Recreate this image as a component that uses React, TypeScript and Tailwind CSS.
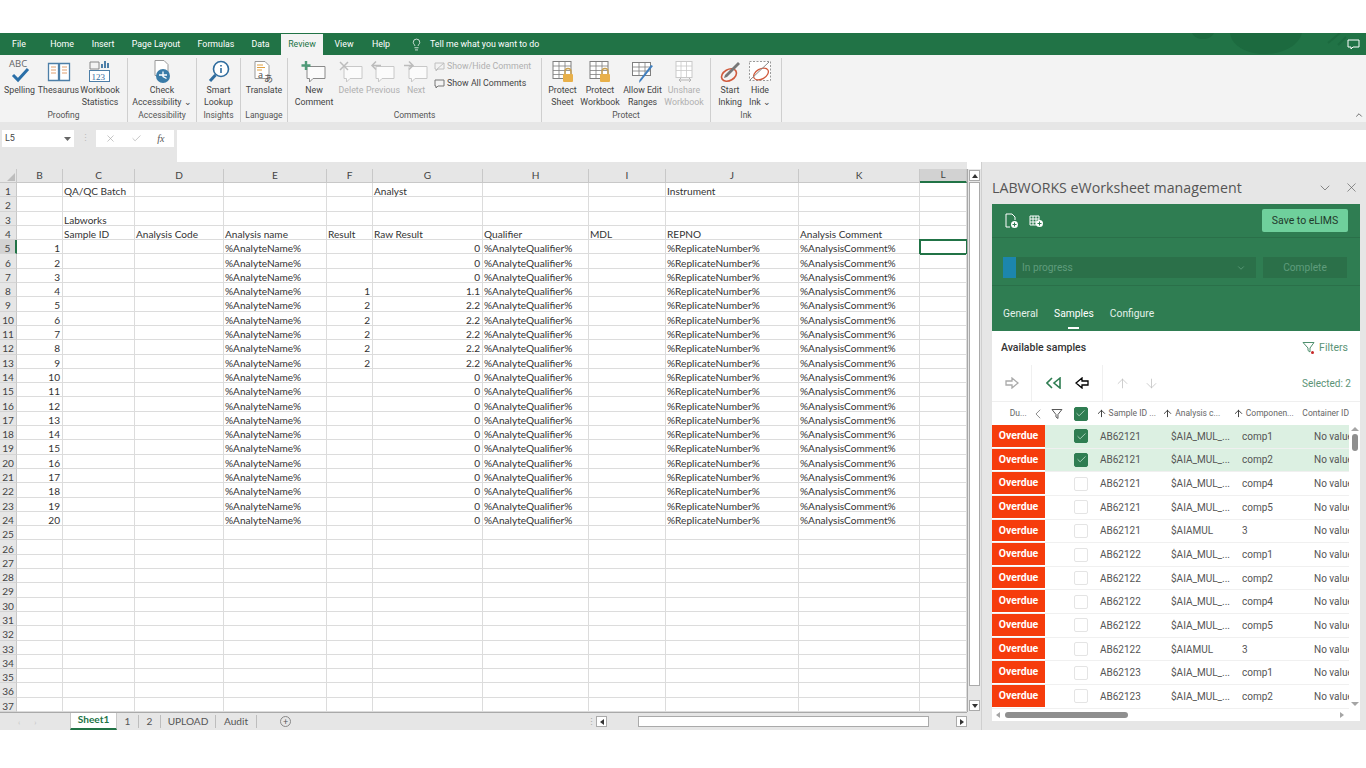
import type { ReactNode } from 'react';
import { ChevronDown, ChevronLeft, ChevronUp, X, Check, Lightbulb, ArrowUp, ArrowDown } from 'lucide-react';

const cols = ['B', 'C', 'D', 'E', 'F', 'G', 'H', 'I', 'J', 'K', 'L'];

const results: Record<number, [string, string]> = {
  8: ['1', '1.1'],
  9: ['2', '2.2'],
  10: ['2', '2.2'],
  11: ['2', '2.2'],
  12: ['2', '2.2'],
  13: ['2', '2.2'],
};

function rowCells(r: number): Record<string, string> {
  if (r === 1) return { C: 'QA/QC Batch', G: 'Analyst', J: 'Instrument' };
  if (r === 3) return { C: 'Labworks' };
  if (r === 4)
    return {
      C: 'Sample ID',
      D: 'Analysis Code',
      E: 'Analysis name',
      F: 'Result',
      G: 'Raw Result',
      H: 'Qualifier',
      I: 'MDL',
      J: 'REPNO',
      K: 'Analysis Comment',
    };
  if (r >= 5 && r <= 24) {
    const res = results[r];
    return {
      B: String(r - 4),
      E: '%AnalyteName%',
      F: res ? res[0] : '',
      G: res ? res[1] : '0',
      H: '%AnalyteQualifier%',
      J: '%ReplicateNumber%',
      K: '%AnalysisComment%',
    };
  }
  return {};
}

const samples = [
  ['AB62121', '$AIA_MUL_...', 'comp1', true],
  ['AB62121', '$AIA_MUL_...', 'comp2', true],
  ['AB62121', '$AIA_MUL_...', 'comp4', false],
  ['AB62121', '$AIA_MUL_...', 'comp5', false],
  ['AB62121', '$AIAMUL', '3', false],
  ['AB62122', '$AIA_MUL_...', 'comp1', false],
  ['AB62122', '$AIA_MUL_...', 'comp2', false],
  ['AB62122', '$AIA_MUL_...', 'comp4', false],
  ['AB62122', '$AIA_MUL_...', 'comp5', false],
  ['AB62122', '$AIAMUL', '3', false],
  ['AB62123', '$AIA_MUL_...', 'comp1', false],
  ['AB62123', '$AIA_MUL_...', 'comp2', false],
] as const;

const tabs: [string, string][] = [
  ['File', 'w-[38px]'],
  ['Home', 'w-[48px]'],
  ['Insert', 'w-[34px]'],
  ['Page Layout', 'w-[72px]'],
  ['Formulas', 'w-[48px]'],
  ['Data', 'w-[41px]'],
  ['Review', 'w-[42px]'],
  ['View', 'w-[42px]'],
  ['Help', 'w-[32px]'],
];

function Bubble({ faded, children }: { faded?: boolean; children?: ReactNode }) {
  const c = faded ? '#c8c8c8' : '#8a8a8a';
  return (
    <svg width="26" height="24" viewBox="0 0 26 24" fill="none">
      <path d="M6 6.500h18v12H12l-3.500 3.500v-3.500H6z" fill="#fbfbfb" stroke={c} />
      {children}
    </svg>
  );
}

function GridLock() {
  const c = '#7f7f7f';
  return (
    <svg width="24" height="24" viewBox="0 0 24 24" fill="none">
      <rect x="2" y="1.500" width="18" height="17" fill="#fff" stroke={c} />
      <path d="M2 6h18M2 10.500h18M2 14.500h18M8 1.500v17M14 1.500v17" stroke={c} strokeWidth="0.8" />
      <path d="M14 14v-2.500a3 3 0 0 1 6 0V14" stroke="#c9a04f" strokeWidth="1.400" />
      <rect x="12" y="14" width="10" height="8" rx="1" fill="#e8b04a" />
    </svg>
  );
}

function RibbonBtn({ w, icon, lines, faded }: { w: string; icon: ReactNode; lines: string[]; faded?: boolean }) {
  return (
    <div className={`${w} flex flex-col items-center`}>
      <div className="h-[27px] flex items-center justify-center">{icon}</div>
      <div className={`text-center leading-[11.500px] ${faded ? 'text-[#b0b0b0]' : 'text-[#444]'}`}>
        {lines.map((l) => (
          <div key={l} className="whitespace-nowrap">
            {l}
          </div>
        ))}
      </div>
    </div>
  );
}

function Group({ w, label, children }: { w: string; label: string; children: ReactNode }) {
  return (
    <div className={`${w} h-[64px] mt-[3px] border-r border-[#cfcfcf] flex flex-col`}>
      <div className="h-[51px] flex">{children}</div>
      <div className="text-center text-[8.500px] leading-[13px] text-[#555]">{label}</div>
    </div>
  );
}

function Ribbon() {
  return (
    <div className="h-[67px] bg-[#f3f3f3] flex text-[8.800px] relative">
      <Group w="w-[128px]" label="Proofing">
        <RibbonBtn
          w="w-[39px]"
          lines={['Spelling']}
          icon={
            <svg width="26" height="27" viewBox="0 0 26 27" fill="none">
              <text x="2" y="9" fontSize="9.500" fill="#666" fontFamily="Open Sans, sans-serif">ABC</text>
              <path d="M6 17l5 5 10-11" stroke="#2a6fa8" strokeWidth="3" />
            </svg>
          }
        />
        <RibbonBtn
          w="w-[39px]"
          lines={['Thesaurus']}
          icon={
            <svg width="24" height="22" viewBox="0 0 24 22" fill="none">
              <path d="M1.500 2.500h10v17h-10zM12.500 2.500h10v17h-10z" fill="#fff" stroke="#4d7fa8" strokeWidth="1.300" />
              <path d="M4 6h5M4 9h5M4 12h5M15 6h5M15 9h5M15 12h5" stroke="#e0a070" />
            </svg>
          }
        />
        <RibbonBtn
          w="w-[44px]"
          lines={['Workbook', 'Statistics']}
          icon={
            <svg width="24" height="24" viewBox="0 0 24 24" fill="none">
              <path d="M2 2h9v7H2z" stroke="#888" />
              <path d="M14 8V4M17 8V1M20 8V3" stroke="#4d7fa8" strokeWidth="2" />
              <rect x="1.500" y="10.500" width="20" height="11" fill="#fff" stroke="#4d7fa8" />
              <text x="3.500" y="19.500" fontSize="9" fill="#2f6c9e" fontFamily="Liberation Serif, serif">123</text>
            </svg>
          }
        />
      </Group>
      <Group w="w-[69px]" label="Accessibility">
        <RibbonBtn
          w="w-[68px]"
          lines={['Check', 'Accessibility ⌄']}
          icon={
            <svg width="24" height="26" viewBox="0 0 24 26" fill="none">
              <path d="M5 1.500h9l4 4v11H5z" fill="#fff" stroke="#999" />
              <circle cx="13" cy="17" r="7" fill="#3a7ca8" />
              <path d="M13 12.500v5l3.500 2M9 16h8" stroke="#fff" strokeWidth="1.300" />
            </svg>
          }
        />
      </Group>
      <Group w="w-[44px]" label="Insights">
        <RibbonBtn
          w="w-[43px]"
          lines={['Smart', 'Lookup']}
          icon={
            <svg width="24" height="26" viewBox="0 0 24 26" fill="none">
              <circle cx="14" cy="10" r="7.500" fill="#fff" stroke="#2f6c9e" strokeWidth="1.600" />
              <path d="M8.500 16L3 22" stroke="#2f6c9e" strokeWidth="3" />
              <path d="M14 9v5M14 6v1.500" stroke="#2f6c9e" strokeWidth="1.600" />
            </svg>
          }
        />
      </Group>
      <Group w="w-[47px]" label="Language">
        <RibbonBtn
          w="w-[46px]"
          lines={['Translate']}
          icon={
            <svg width="24" height="26" viewBox="0 0 24 26" fill="none">
              <path d="M3 2.500h10l4 4v13H3z" fill="#fff" stroke="#999" />
              <path d="M5 6h6M5 8.500h8M5 11h5" stroke="#e0a040" />
              <text x="6" y="19" fontSize="9" fill="#444" fontFamily="Open Sans, sans-serif">a</text>
              <text x="12" y="23" fontSize="9" fill="#444" fontFamily="Noto Sans CJK JP, sans-serif">あ</text>
            </svg>
          }
        />
      </Group>
      <Group w="w-[254px]" label="Comments">
        <RibbonBtn
          w="w-[48px] ml-[2px]"
          lines={['New', 'Comment']}
          icon={
            <Bubble>
              <path d="M5 1v9M0.500 5.500h9" stroke="#4f9a78" strokeWidth="2.400" />
            </Bubble>
          }
        />
        <RibbonBtn
          w="w-[26px]"
          lines={['Delete']}
          faded
          icon={
            <Bubble faded>
              <path d="M2 2l8 8M10 2l-8 8" stroke="#bcbcbc" strokeWidth="1.500" />
            </Bubble>
          }
        />
        <RibbonBtn
          w="w-[38px]"
          lines={['Previous']}
          faded
          icon={
            <Bubble faded>
              <path d="M11 5.500H2M6 1.500l-4 4 4 4" stroke="#bcbcbc" strokeWidth="1.500" />
            </Bubble>
          }
        />
        <RibbonBtn
          w="w-[28px]"
          lines={['Next']}
          faded
          icon={
            <Bubble faded>
              <path d="M1 5.500h9M6 1.500l4 4-4 4" stroke="#bcbcbc" strokeWidth="1.500" />
            </Bubble>
          }
        />
        <div className="flex flex-col gap-[5px] pt-[3px] pl-[4px] whitespace-nowrap">
          <div className="flex items-center gap-[2px] h-[12px] text-[#b0b0b0]">
            <svg width="11" height="10" viewBox="0 0 11 10" fill="none">
              <path d="M1 1h9v6H4L2 9V7H1z" stroke="#c0c0c0" />
              <path d="M2 8l8-7" stroke="#c0c0c0" />
            </svg>
            Show/Hide Comment
          </div>
          <div className="flex items-center gap-[2px] h-[12px] text-[#444]">
            <svg width="11" height="10" viewBox="0 0 11 10" fill="none">
              <path d="M1 1h9v6H4L2 9V7H1z" stroke="#777" />
            </svg>
            Show All Comments
          </div>
        </div>
      </Group>
      <Group w="w-[169px]" label="Protect">
        <RibbonBtn w="w-[37px] ml-[2px]" lines={['Protect', 'Sheet']} icon={<GridLock />} />
        <RibbonBtn w="w-[38px]" lines={['Protect', 'Workbook']} icon={<GridLock />} />
        <RibbonBtn
          w="w-[47px]"
          lines={['Allow Edit', 'Ranges']}
          icon={
            <svg width="24" height="24" viewBox="0 0 24 24" fill="none">
              <rect x="1.500" y="2.500" width="18" height="13" fill="#fff" stroke="#7f7f7f" />
              <path d="M1.500 7h18M1.500 11h18M8 2.500v13M14 2.500v13" stroke="#7f7f7f" strokeWidth="0.8" />
              <path d="M22 6L10 21l-2 2 .5-3L20 5z" fill="#3f7fc0" />
            </svg>
          }
        />
        <RibbonBtn
          w="w-[36px]"
          lines={['Unshare', 'Workbook']}
          faded
          icon={
            <svg width="24" height="24" viewBox="0 0 24 24" fill="none">
              <rect x="4" y="1.500" width="16" height="16" fill="#fff" stroke="#c9c9c9" />
              <path d="M4 6h16M4 10.500h16M9 1.500v16M14.500 1.500v16" stroke="#c9c9c9" strokeWidth="0.8" />
              <path d="M7 20h12M9 18l-2 2 2 2M17 18l2 2-2 2" stroke="#b5b5b5" />
            </svg>
          }
        />
      </Group>
      <Group w="w-[71px]" label="Ink">
        <RibbonBtn
          w="w-[38px]"
          lines={['Start', 'Inking']}
          icon={
            <svg width="24" height="24" viewBox="0 0 24 24" fill="none">
              <ellipse cx="11" cy="15" rx="8" ry="5.500" stroke="#d05a3c" strokeWidth="1.600" transform="rotate(-30 11 15)" />
              <path d="M20 2l2 2L9 17l-3 1 1-3z" fill="#777" />
            </svg>
          }
        />
        <RibbonBtn
          w="w-[22px]"
          lines={['Hide', 'Ink ⌄']}
          icon={
            <svg width="24" height="24" viewBox="0 0 24 24" fill="none">
              <path d="M1.500 1.500h21v19h-21z" stroke="#999" strokeDasharray="2 1.500" fill="#fff" />
              <ellipse cx="13" cy="14" rx="8" ry="5" stroke="#d05a3c" strokeWidth="1.300" transform="rotate(-30 13 14)" />
              <path d="M2 20L21 2" stroke="#888" />
            </svg>
          }
        />
      </Group>
      <ChevronUp className="absolute right-[2px] bottom-[2px] w-[10px] h-[10px] text-[#555]" />
    </div>
  );
}

function FormulaBar() {
  return (
    <div className="h-[40px] bg-[#e6e6e6] pt-[8px] flex items-start">
      <div className="ml-[2px] w-[72px] h-[17px] bg-white flex items-center justify-between px-[3px] text-[9px] text-[#444]">
        L5
        <svg width="7" height="4" viewBox="0 0 7 4">
          <path d="M0 0h7L3.500 4z" fill="#666" />
        </svg>
      </div>
      <div className="w-[22px] text-center text-[#bbb] text-[9px] leading-[16px]">⋮</div>
      <div className="w-[78px] h-[17px] bg-white flex items-center justify-around px-[2px] text-[#a8a8a8]">
        <X className="w-[11px] h-[11px]" strokeWidth={1.400} />
        <Check className="w-[11px] h-[11px]" strokeWidth={1.400} />
        <span className="text-[10px] italic text-[#555]" style={{ fontFamily: '"Liberation Serif", serif' }}>
          fx
        </span>
      </div>
      <div className="ml-[3px] flex-1 h-[32px] bg-white" />
    </div>
  );
}

function Sheet() {
  const rows = Array.from({ length: 37 }, (_, i) => i + 1);
  return (
    <div className="flex-1 flex flex-col min-h-0" style={{ fontFamily: 'Lato, sans-serif' }}>
      <div className="flex-1 min-h-0 bg-white grid grid-cols-[17px_46px_72px_89px_103px_46px_110px_106px_77px_133px_121px_47px] grid-rows-[14px_repeat(37,14.300px)] text-[10.100px] text-[#333] overflow-hidden">
        <div className="bg-[#e6e6e6] border-r border-b border-[#c8c8c8] flex items-end justify-end p-[1px]">
          <div className="w-0 h-0 border-l-[8px] border-l-transparent border-b-[8px] border-b-[#bdbdbd]" />
        </div>
        {cols.map((c) => (
          <div
            key={c}
            className={`flex items-center justify-center border-r border-[#c8c8c8] text-[#444] ${
              c === 'L' ? 'bg-[#d2d2d2] border-b-2 border-b-[#217346]' : 'bg-[#e6e6e6] border-b'
            }`}
          >
            {c}
          </div>
        ))}
        {rows.map((r) => {
          const cells = rowCells(r);
          return [
            <div
              key={`h${r}`}
              className={`flex items-center justify-center pt-[3px] leading-none border-b border-[#d4d4d4] text-[#444] ${
                r === 5 ? 'bg-[#d2d2d2] border-r-2 border-r-[#217346]' : 'bg-[#e6e6e6] border-r border-r-[#c8c8c8]'
              }`}
            >
              {r}
            </div>,
            ...cols.map((c) => {
              const right = c === 'B' || ((c === 'F' || c === 'G') && r >= 5);
              return (
                <div
                  key={`${c}${r}`}
                  className={`border-r border-b border-[#dcdcdc] pl-[1px] pr-[2px] pt-[3px] flex items-center whitespace-nowrap leading-none ${
                    right ? 'justify-end' : ''
                  } ${c === 'L' && r === 5 ? 'outline-2 -outline-offset-1 outline-[#217346]' : ''}`}
                >
                  {cells[c]}
                </div>
              );
            }),
          ];
        })}
      </div>
      <div className="h-[18px] bg-[#e6e6e6] border-t border-[#a9a9a9] flex items-center text-[10.100px] text-[#555]">
        <div className="w-[70px] pl-[18px] flex gap-[14px] text-[#c4c4c4] text-[8px]">
          <span>‹</span>
          <span>›</span>
        </div>
        <div className="w-[47px] h-[17px] -mt-[1px] bg-white border-b-2 border-[#217346] border-x border-x-[#c8c8c8] flex items-center justify-center font-bold text-[#217346]">
          Sheet1
        </div>
        <div className="w-[22px] h-[13px] border-r border-[#bdbdbd] flex items-center justify-center">1</div>
        <div className="w-[22px] h-[13px] border-r border-[#bdbdbd] flex items-center justify-center">2</div>
        <div className="w-[55px] h-[13px] border-r border-[#bdbdbd] flex items-center justify-center">UPLOAD</div>
        <div className="w-[41px] h-[13px] border-r border-[#bdbdbd] flex items-center justify-center">Audit</div>
        <div className="ml-[23px] w-[11px] h-[11px] rounded-full border border-[#888] flex items-center justify-center text-[9px] leading-none">
          +
        </div>
        <div className="ml-[296px] w-[3px] text-[#aaa] text-[9px]">⋮</div>
        <div className="ml-[6px] w-[11px] h-[11px] bg-white border border-[#aaa] flex items-center justify-center">
          <div className="w-0 h-0 border-y-[3px] border-y-transparent border-r-[4px] border-r-[#333]" />
        </div>
        <div className="w-[31px]" />
        <div className="w-[291px] h-[11px] bg-white border border-[#aaa]" />
        <div className="w-[27px]" />
        <div className="w-[11px] h-[11px] bg-white border border-[#aaa] flex items-center justify-center">
          <div className="w-0 h-0 border-y-[3px] border-y-transparent border-l-[4px] border-l-[#333]" />
        </div>
      </div>
    </div>
  );
}

function SheetScroll() {
  return (
    <div className="w-[14px] h-[561px] mt-[7px] bg-[#e6e6e6] flex flex-col">
      <div className="h-[543px] border-l border-[#a9a9a9] flex flex-col items-center py-[1px]">
        <div className="w-[11px] h-[11px] bg-white border border-[#aaa] flex items-center justify-center">
          <div className="w-0 h-0 border-x-[3px] border-x-transparent border-b-[4px] border-b-[#333]" />
        </div>
        <div className="mt-[1px] w-[11px] flex-1 mb-[14px] bg-white border border-[#aaa]" />
        <div className="w-[11px] h-[11px] bg-white border border-[#aaa] flex items-center justify-center">
          <div className="w-0 h-0 border-x-[3px] border-x-transparent border-t-[4px] border-t-[#333]" />
        </div>
      </div>
    </div>
  );
}

function Checkbox({ on }: { on?: boolean }) {
  return (
    <div
      className={`w-[14px] h-[14px] rounded-[2px] flex items-center justify-center border ${
        on ? 'bg-[#2f7d52] border-[#2f7d52]' : 'bg-white border-[#e4e4e4]'
      }`}
    >
      {on && <Check className="w-[11px] h-[11px] text-[#cfe9da]" strokeWidth={1.600} />}
    </div>
  );
}

function Pane() {
  return (
    <div className="w-[385px] bg-[#e6e6e6] border-l border-[#cfcfcf] flex flex-col" style={{ fontFamily: 'Roboto, sans-serif' }}>
      <div className="h-[42px] pl-[10px] pr-[7px] pt-[9px] flex items-center justify-between">
        <span className="text-[14.200px] text-[#555]" style={{ fontFamily: '"Open Sans", sans-serif' }}>
          LABWORKS eWorksheet management
        </span>
        <div className="flex items-center gap-[11px] text-[#555]">
          <ChevronDown className="w-[16px] h-[16px]" strokeWidth={1} />
          <X className="w-[15px] h-[15px]" strokeWidth={1} />
        </div>
      </div>
      <div className="ml-[10px] mr-[6px] flex-1 min-h-0 flex flex-col">
        <div className="h-[127px] bg-[#2f7d52] flex flex-col">
          <div className="h-[34px] border-b border-[#2a7049] flex items-center justify-between pl-[12px] pr-[12px]">
            <div className="flex items-center gap-[10px]">
              <svg width="15" height="16" viewBox="0 0 15 16" fill="none">
                <path d="M6 14H2V1h6l3 3v3" stroke="#fff" strokeWidth="1" />
                <circle cx="10.500" cy="11.500" r="3.500" fill="#fff" />
                <path d="M10.500 9.500v4M8.500 11.500h4" stroke="#2f7d52" />
              </svg>
              <svg width="15" height="14" viewBox="0 0 15 14" fill="none">
                <path d="M1 2h9v9H1zM1 5h9M1 8h9M4 2v9M7 2v9" stroke="#fff" />
                <circle cx="10.500" cy="9.500" r="3.500" fill="#fff" />
                <path d="M10.500 7.500v4M8.500 9.500h4" stroke="#2f7d52" />
              </svg>
            </div>
            <div className="w-[86px] h-[23px] rounded-[2px] bg-[#6fd09c] flex items-center justify-center text-[10.500px] text-[#1f3a2b]">
              Save to eLIMS
            </div>
          </div>
          <div className="h-[48px] border-b border-[#2a7049] flex items-start pt-[19px] pl-[11px] gap-[7px]">
            <div className="w-[253px] h-[21px] bg-[#2b7049] flex items-center">
              <div className="w-[13px] h-full bg-[#1c86ad]" />
              <span className="ml-[6px] text-[10.200px] text-[#5f9c7c]">In progress</span>
              <ChevronDown className="ml-auto mr-[10px] w-[10px] h-[10px] text-[#5f9c7c]" />
            </div>
            <div className="w-[84px] h-[21px] bg-[#2b7049] flex items-center justify-center text-[10.200px] text-[#5f9c7c]">
              Complete
            </div>
          </div>
          <div className="flex-1 flex pl-[11px] gap-[16px] text-[10.300px] text-[#e4f1ea] pt-[20px]">
            <span>General</span>
            <div className="flex flex-col items-center">
              <span className="text-white">Samples</span>
              <div className="mt-[6px] w-[11px] h-[2px] bg-white" />
            </div>
            <span>Configure</span>
          </div>
        </div>
        <div className="h-[390px] bg-white flex flex-col overflow-hidden">
          <div className="h-[34px] shrink-0 flex items-center justify-between pl-[9px] pr-[12px] text-[10.500px]">
            <span className="font-medium text-[#333]">Available samples</span>
            <span className="flex items-center gap-[3px] text-[#5b9376]">
              <svg width="14" height="14" viewBox="0 0 14 14" fill="none">
                <path d="M1 1.500h11L8 7v4L6 9.500V7z" stroke="#4f8f6e" />
                <circle cx="10.500" cy="11.500" r="1.500" fill="#c62828" />
              </svg>
              Filters
            </span>
          </div>
          <div className="h-[37px] shrink-0 border-b border-[#efefef] flex items-center pr-[9px]">
            <div className="w-[40px] h-full border-r border-[#f0f0f0] flex items-center justify-center">
              <svg width="14" height="12" viewBox="0 0 14 12" fill="none">
                <path d="M1 4h6V1l6 5-6 5V8H1z" stroke="#aaa" strokeWidth="1.300" />
              </svg>
            </div>
            <div className="w-[71px] h-full border-r border-[#f0f0f0] flex items-center justify-center gap-[14px]">
              <svg width="15" height="12" viewBox="0 0 15 12" fill="none">
                <path d="M6 1L1 6l5 5M14 1L8 6l6 5V1z" stroke="#2f7d52" strokeWidth="1.600" />
              </svg>
              <svg width="14" height="12" viewBox="0 0 14 12" fill="none">
                <path d="M13 4H7V1L1 6l6 5V8h6z" stroke="#000" strokeWidth="1.300" />
              </svg>
            </div>
            <div className="flex items-center gap-[14px] pl-[12px] text-[#bdbdbd]">
              <ArrowUp className="w-[15px] h-[15px]" strokeWidth={1.200} />
              <ArrowDown className="w-[15px] h-[15px]" strokeWidth={1.200} />
            </div>
            <span className="ml-auto text-[10px] text-[#5b9376]">Selected: 2</span>
          </div>
          <div className="flex-1 min-h-0 flex">
            <div className="flex-1 min-w-0 flex flex-col overflow-hidden">
              <div className="h-[23px] shrink-0 flex items-center text-[8.500px] text-[#666] whitespace-nowrap">
                <div className="w-[38px] text-right pr-[3px]">Du...</div>
                <ChevronLeft className="w-[16px] h-[16px] text-[#555]" strokeWidth={1} />
                <svg className="ml-[5px]" width="12" height="12" viewBox="0 0 12 12" fill="none">
                  <path d="M1 1.500h10L7 6.500v4L5 9V6.500z" stroke="#555" />
                </svg>
                <div className="ml-[11px]">
                  <Checkbox on />
                </div>
                <div className="w-[71px] pl-[4px] flex items-center gap-[2px] ml-[4px]">
                  <ArrowUp className="w-[11px] h-[11px] text-[#333]" />
                  Sample ID ...
                </div>
                <div className="w-[71px] flex items-center gap-[2px]">
                  <ArrowUp className="w-[11px] h-[11px] text-[#333]" />
                  Analysis c...
                </div>
                <div className="w-[70px] flex items-center gap-[2px]">
                  <ArrowUp className="w-[11px] h-[11px] text-[#333]" />
                  Componen...
                </div>
                <div>Container ID</div>
              </div>
              {samples.map(([id, code, comp, on], i) => (
                <div
                  key={i}
                  className={`h-[23.650px] shrink-0 flex items-center text-[10px] text-[#555] whitespace-nowrap border-b border-[#f0f0f0] ${
                    on ? 'bg-[#dcf0e2]' : ''
                  }`}
                >
                  <div className="w-[53px] shrink-0 h-full bg-[#f63c0c] border-b border-white flex items-center justify-center text-[10.500px] font-bold text-white">
                    Overdue
                  </div>
                  <div className="ml-[29px] w-[26px] shrink-0">
                    <Checkbox on={on} />
                  </div>
                  <div className="w-[71px] shrink-0">{id}</div>
                  <div className="w-[71px] shrink-0">{code}</div>
                  <div className="w-[72px] shrink-0">{comp}</div>
                  <div>No value</div>
                </div>
              ))}
              <div className="flex-1 w-[53px] bg-[#f63c0c]" />
            </div>
            <div className="w-[11px] shrink-0 flex flex-col items-center pt-[23px]">
              <div className="w-0 h-0 mt-[2px] border-x-[4px] border-x-transparent border-b-[4px] border-b-[#a5a5a5]" />
              <div className="mt-[3px] w-[6px] h-[17px] rounded-[3px] bg-[#8f8f8f]" />
              <div className="mt-auto mb-[3px] w-0 h-0 border-x-[4px] border-x-transparent border-t-[4px] border-t-[#a5a5a5]" />
            </div>
          </div>
          <div className="h-[12px] shrink-0 flex items-center px-[4px]">
            <div className="w-0 h-0 border-y-[3px] border-y-transparent border-r-[4px] border-r-[#a5a5a5]" />
            <div className="ml-[5px] w-[123px] h-[6px] rounded-[3px] bg-[#8f8f8f]" />
            <div className="ml-auto mr-[12px] w-0 h-0 border-y-[3px] border-y-transparent border-l-[4px] border-l-[#a5a5a5]" />
          </div>
        </div>
      </div>
    </div>
  );
}

export default function App() {
  return (
    <div className="h-[768px] w-[1366px] bg-white flex flex-col overflow-hidden" style={{ fontFamily: 'Roboto, sans-serif' }}>
      <div className="h-[33px] shrink-0" />
      <div className="h-[22px] shrink-0 bg-[#217346] flex items-end text-[8.800px] text-white relative overflow-hidden">
        {/* faint office watermark in the title bar */}
        <svg className="absolute left-[1180px] top-0" width="170" height="22" viewBox="0 0 170 22" fill="none">
          <path d="M12 0c4 8 18 8 22 0z" fill="#1c6a3f" />
          <path d="M50 0c4 28 64 28 72 0z" fill="#1c6a3f" />
          <path d="M148 10l12-10M158 12l8-8" stroke="#1c6a3f" strokeWidth="2" />
        </svg>
        {tabs.map(([t, w]) => (
          <div
            key={t}
            className={`${w} h-[21px] relative flex items-center justify-center ${t === 'Review' ? 'bg-[#f3f3f3] text-[#217346]' : ''}`}
          >
            {t}
          </div>
        ))}
        <Lightbulb className="ml-[13px] mb-[4px] w-[13px] h-[13px]" strokeWidth={1.400} />
        <span className="ml-[7px] h-[21px] flex items-center">Tell me what you want to do</span>
        <svg className="ml-auto mr-[6px] mb-[4px] relative" width="13" height="13" viewBox="0 0 13 13" fill="none">
          <path d="M1 2h11v7H6l-2 2V9H1z" stroke="#fff" />
        </svg>
      </div>
      <Ribbon />
      <FormulaBar />
      <div className="h-[568px] shrink-0 flex">
        <div className="w-[967px] flex flex-col pt-[7px] bg-[#e6e6e6]">
          <Sheet />
        </div>
        <SheetScroll />
        <Pane />
      </div>
    </div>
  );
}
